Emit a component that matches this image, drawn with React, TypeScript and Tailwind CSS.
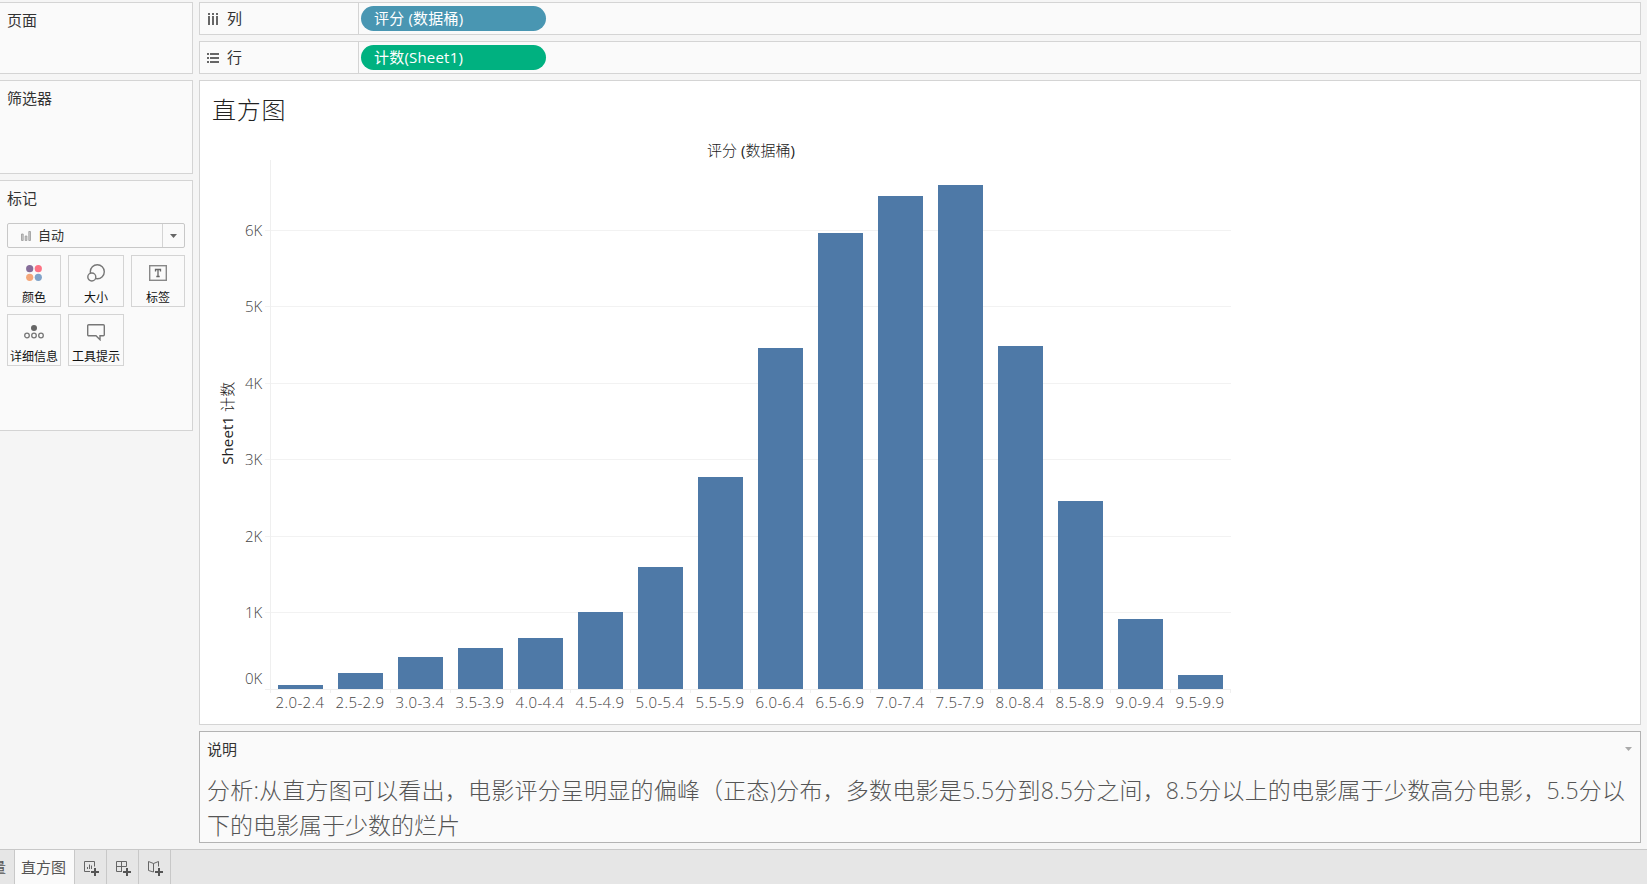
const CJK = "font-['Open_Sans','Noto_Sans_CJK_SC',sans-serif]";

const bars = [
  { label: '2.0-2.4', height: 4 },
  { label: '2.5-2.9', height: 16 },
  { label: '3.0-3.4', height: 32 },
  { label: '3.5-3.9', height: 41 },
  { label: '4.0-4.4', height: 51 },
  { label: '4.5-4.9', height: 77 },
  { label: '5.0-5.4', height: 122 },
  { label: '5.5-5.9', height: 212 },
  { label: '6.0-6.4', height: 341 },
  { label: '6.5-6.9', height: 456 },
  { label: '7.0-7.4', height: 493 },
  { label: '7.5-7.9', height: 504 },
  { label: '8.0-8.4', height: 343 },
  { label: '8.5-8.9', height: 188 },
  { label: '9.0-9.4', height: 70 },
  { label: '9.5-9.9', height: 14 },
];

// y positions inside the plot area
const ticks = [
  { label: '6K', y: 70 },
  { label: '5K', y: 146 },
  { label: '4K', y: 223 },
  { label: '3K', y: 299 },
  { label: '2K', y: 376 },
  { label: '1K', y: 452 },
];

function ColumnsIcon() {
  return (
    <svg width="10" height="12" viewBox="0 0 10 12" fill="#666" shapeRendering="crispEdges">
      <path d="M0 0h2v2H0zM4 0h2v2H4zM8 0h2v2H8zM0 3h2v9H0zM4 3h2v9H4zM8 3h2v9H8z" />
    </svg>
  );
}

function RowsIcon() {
  return (
    <svg className="-ml-px" width="12" height="10" viewBox="0 0 12 10" fill="#666" shapeRendering="crispEdges">
      <path d="M0 0h2v2H0zM0 4h2v2H0zM0 8h2v2H0zM3 0h9v2H3zM3 4h9v2H3zM3 8h9v2H3z" />
    </svg>
  );
}

function ColorIcon() {
  return (
    <svg width="18" height="18" viewBox="0 0 18 18">
      <circle cx="4.7" cy="4.7" r="3.6" fill="#856c98" />
      <circle cx="13.3" cy="4.7" r="3.6" fill="#fd7284" />
      <circle cx="4.7" cy="13.3" r="3.6" fill="#f4a77a" />
      <circle cx="13.3" cy="13.3" r="3.6" fill="#80a3c9" />
    </svg>
  );
}

function SizeIcon() {
  return (
    <svg width="18" height="18" viewBox="0 0 18 18" fill="none" stroke="#777" strokeWidth="1.4">
      <circle cx="10.3" cy="7.8" r="7" />
      <circle cx="4.8" cy="13" r="4" fill="#fafafa" />
    </svg>
  );
}

function LabelIcon() {
  return (
    <svg width="18" height="16" viewBox="0 0 18 16" fill="none" stroke="#888" strokeWidth="1.4">
      <rect x="0.7" y="0.7" width="16.6" height="14.6" />
      <path d="M6.5 6.5v-2h5v2M9 4.5v7M7.3 11.5h3.4" stroke="#666" strokeWidth="1.3" />
    </svg>
  );
}

function DetailIcon() {
  return (
    <svg width="20" height="14" viewBox="0 0 20 14" fill="none" stroke="#777" strokeWidth="1.3">
      <circle cx="10" cy="3" r="3" fill="#666" stroke="none" />
      <circle cx="3" cy="10.5" r="2.3" />
      <circle cx="10" cy="10.5" r="2.3" />
      <circle cx="17" cy="10.5" r="2.3" />
    </svg>
  );
}

function TooltipIcon() {
  return (
    <svg width="18" height="17" viewBox="0 0 18 17" fill="none" stroke="#777" strokeWidth="1.4">
      <path d="M1.7.7h14.6a1 1 0 0 1 1 1v9a1 1 0 0 1-1 1H13v4l-4-4H1.7a1 1 0 0 1-1-1v-9a1 1 0 0 1 1-1z" />
    </svg>
  );
}

function BarsIcon() {
  return (
    <svg width="10" height="10" viewBox="0 0 10 10" fill="#ccc" stroke="#999" strokeWidth="0.8">
      <path d="M.5 3h1.7v6.5H.5zM4.2 5h1.7v4.5H4.2zM7.8.5h1.7v9H7.8z" />
    </svg>
  );
}

const markButtons = [
  { label: '颜色', icon: <ColorIcon />, width: 'w-[54px]' },
  { label: '大小', icon: <SizeIcon />, width: 'w-14' },
  { label: '标签', icon: <LabelIcon />, width: 'w-[54px]' },
  { label: '详细信息', icon: <DetailIcon />, width: 'w-[54px]' },
  { label: '工具提示', icon: <TooltipIcon />, width: 'w-14' },
];

// new worksheet, new dashboard, new story
const newSheetIcons = [
  'M7 11.5H1.5v-10h10v5M4.5 9V7M6.5 9V4.5M8.5 9V5.5',
  'M7 11.5H1.5v-10h10v5M6.5 1.5v10M1.5 6.5h10',
  'M6.5 3.5l-5-2v9l5 1.5M6.5 3.5l5-2v5M6.5 3.5V12',
];

function Sidebar() {
  return (
    <aside className="flex w-[193px] flex-col gap-1.5 pt-0.5 text-[15px] leading-5 text-[#333]">
      <section className="h-[72px] border-y border-r border-[#d4d4d4] bg-[#fafafa] pt-[7px] pl-[7px]">页面</section>
      <section className="h-[94px] border-y border-r border-[#d4d4d4] bg-[#fafafa] pt-[7px] pl-[7px]">筛选器</section>
      <section className="h-[251px] border-y border-r border-[#d4d4d4] bg-[#fafafa] pt-[7px] pl-[7px]">
        <h2>标记</h2>
        <div className="mt-[15px] flex h-[25px] w-[178px] items-center rounded-[2px] border border-[#c8c8c8] text-[13px]">
          <span className="ml-[13px]"><BarsIcon /></span>
          <span className="ml-[7px] flex-1 pb-px">自动</span>
          <span className="flex h-full w-[22px] items-center justify-center border-l border-[#d4d4d4]">
            <svg width="7" height="4" viewBox="0 0 7 4" fill="#666"><path d="M0 0h7L3.5 4z" /></svg>
          </span>
        </div>
        <div className="mt-[7px] flex w-[178px] flex-wrap gap-[7px]">
          {markButtons.map((b) => (
            <button
              key={b.label}
              className={`${b.width} flex h-[52px] flex-col items-center border border-[#d4d4d4] text-[12px] leading-4 whitespace-nowrap text-[#111]`}
            >
              <span className="flex h-[34px] items-center">{b.icon}</span>
              {b.label}
            </button>
          ))}
        </div>
      </section>
    </aside>
  );
}

function Shelf({ icon, name, pill, color }: { icon: React.ReactNode; name: string; pill: string; color: string }) {
  return (
    <div className="flex h-[33px] items-center border border-[#d4d4d4] bg-[#fafafa] text-[15px] text-[#333]">
      <div className="flex h-full w-[159px] items-center border-r border-[#d4d4d4] pl-2">
        <span className="w-[19px]">{icon}</span>
        {name}
      </div>
      <div className={`${color} ml-0.5 flex h-[25px] w-[185px] items-center rounded-full pl-[13px] tracking-[0.2px] text-white`}>
        {pill}
      </div>
    </div>
  );
}

function Chart() {
  return (
    <section className="h-[645px] border border-[#d4d4d4] bg-white">
      <h1 className="mt-[12px] ml-[12px] h-[34px] text-[24px] leading-[34px] font-light tracking-[0.8px] text-[#222]">
        直方图
      </h1>
      <div className="mt-[13px] ml-[70px] h-5 w-[962px] text-center text-[15px] leading-5 font-light text-[#222]">
        评分 <span className="font-normal">(</span>数据桶<span className="font-normal">)</span>
      </div>
      <div className="flex">
        <div className="flex w-[36px] items-center justify-center pb-[6px] pl-[18px]">
          <span className="-rotate-90 text-[15px] tracking-[0.1px] whitespace-nowrap text-[#222]">
            Sheet1 <span className="font-light">计数</span>
          </span>
        </div>
        <div className="relative h-[533px] w-[995px]">
          {ticks.map((t) => (
            <div key={t.label} className="absolute right-0 left-[9px] flex h-[21px] items-center" style={{ top: t.y - 10 }}>
              <span className="w-5 text-[15px] font-light text-[#444]">{t.label}</span>
              <span className="h-px flex-1 bg-[#f2f2f2]" />
            </div>
          ))}
          <span className="absolute top-[508px] left-[9px] text-[15px] leading-5 font-light text-[#444]">0K</span>
          <div className="absolute top-0 left-[34px] flex h-[529px] items-end gap-[15px] border-l border-[#efefef] pl-[7px]">
            {bars.map((b) => (
              <div key={b.label} className="w-[45px] bg-[#4e79a7]" style={{ height: b.height }} />
            ))}
          </div>
          <div className="absolute top-[529px] left-[29px] flex w-[966px] border-t border-[#efefef] pl-[5px]">
            {bars.map((b) => (
              <span key={b.label} className="h-[3px] w-[60px] border-l border-[#efefef]" />
            ))}
            <span className="h-[3px] w-px bg-[#efefef]" />
          </div>
        </div>
      </div>
      <div className="-mt-px ml-[70px] flex">
        {bars.map((b) => (
          <span key={b.label} className="w-[60px] text-center text-[15px] leading-5 font-light tracking-[0.4px] text-[#444]">
            {b.label}
          </span>
        ))}
      </div>
    </section>
  );
}

function Caption() {
  return (
    <section className="h-[112px] border border-[#b3b3b3] bg-[#fafafa] pt-[7px] pl-[7px]">
      <div className="flex h-5 items-center justify-between pr-2 text-[15px] leading-5 text-[#333]">
        说明
        <svg width="7" height="4" viewBox="0 0 7 4" fill="#aaa"><path d="M0 0h7L3.5 4z" /></svg>
      </div>
      <p className="mt-[14px] text-[23px] leading-[35px] font-light whitespace-nowrap text-[#555]">
        <span className="tracking-[0.21px]">
          分析:从直方图可以看出，电影评分呈明显的偏峰（正态)分布，多数电影是5.5分到8.5分之间，8.5分以上的电影属于少数高分电影，5.5分以
        </span>
        <br />
        下的电影属于少数的烂片
      </p>
    </section>
  );
}

export default function App() {
  return (
    <div className={`${CJK} flex h-[884px] w-[1647px] flex-col overflow-hidden bg-[#f5f5f5]`}>
      <div className="flex h-[849px] gap-1.5">
        <Sidebar />
        <main className="flex w-[1442px] flex-col gap-1.5 pt-0.5">
          <Shelf icon={<ColumnsIcon />} name="列" pill="评分 (数据桶)" color="bg-[#4996b2]" />
          <Shelf icon={<RowsIcon />} name="行" pill="计数(Sheet1)" color="bg-[#00b180]" />
          <Chart />
          <Caption />
        </main>
      </div>
      <footer className="flex h-[35px] border-t border-[#c8c8c8] bg-[#e6e6e6] text-[15px] text-[#555]">
        <div className="flex w-[15px] items-center justify-end overflow-hidden border-r border-[#c8c8c8] pr-2">量</div>
        <div className="flex w-[60px] items-center border-r border-[#c8c8c8] bg-[#fafafa] pl-1.5">直方图</div>
        {newSheetIcons.map((d) => (
          <button key={d} className="flex w-8 items-center border-r border-[#c8c8c8] pt-0.5 pl-2">
            <svg width="16" height="16" viewBox="0 0 16 16" fill="none" stroke="#666">
              <path d={d} />
              <path d="M12 8v8M8 12h8" stroke="#555" strokeWidth="2" />
            </svg>
          </button>
        ))}
      </footer>
    </div>
  );
}
